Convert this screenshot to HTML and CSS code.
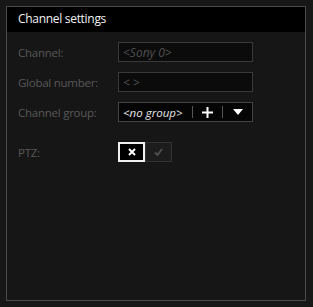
FILE: index.html
```html
<!DOCTYPE html>
<html lang="en">
<head>
  <meta charset="UTF-8">
  <title>Channel settings</title>
  <link rel="stylesheet" href="styles.css">
</head>
<body>
  <div class="panel">
    <div class="panel-title">Channel settings</div>
    <div class="form">
      <label>Channel:</label>
      <div class="field"><span class="hint">&lt;Sony 0&gt;</span></div>

      <label>Global number:</label>
      <div class="field"><span class="hint wide">&lt;&gt;</span></div>

      <label>Channel group:</label>
      <div class="field group">
        <span class="value">&lt;no group&gt;</span>
        <span class="sep"></span>
        <span class="btn">
          <svg width="11" height="11" viewBox="0 0 11 11"><path d="M5.5 0v11M0 5.5h11" stroke="#fff" stroke-width="2"/></svg>
        </span>
        <span class="sep"></span>
        <span class="btn">
          <svg width="10" height="6" viewBox="0 0 10 6"><path d="M0 0h10L5 6z" fill="#fff"/></svg>
        </span>
      </div>

      <label class="ptz">PTZ:</label>
      <div class="toggle ptz">
        <span class="opt on">
          <svg width="8" height="8" viewBox="0 0 8 8"><path d="M1 1l6 6M7 1L1 7" stroke="#fff" stroke-width="2"/></svg>
        </span>
        <span class="opt">
          <svg width="9" height="8" viewBox="0 0 9 8"><path d="M1 4.5l2.5 2.5L8 1" stroke="#4e4e4e" stroke-width="2" fill="none"/></svg>
        </span>
      </div>
    </div>
  </div>
</body>
</html>
```

FILE: styles.css
```css
body {
  margin: 0;
  padding: 6px;
  background-color: #171717;
  font-family: "Open Sans", "Noto Sans", sans-serif;
}
.panel {
  width: 298px;
  height: 293px;
  border: 1px solid #4b4b4b;
  background-color: #161616;
}
.panel-title {
  height: 25px;
  line-height: 24px;
  padding-left: 11px;
  background-color: #000;
  color: #f2f2f2;
  font-size: 12px;
  letter-spacing: -0.3px;
}
.form {
  display: grid;
  grid-template-columns: 100px 135px;
  grid-auto-rows: 20px;
  row-gap: 10px;
  padding: 10px 0 0 11px;
  align-items: center;
}
.form label {
  color: #585858;
  font-size: 11.5px;
  letter-spacing: -0.25px;
}
.ptz {
  margin-top: 20px;
}
.field {
  height: 20px;
  box-sizing: border-box;
  border: 1px solid #3a3a3a;
  background-color: #0b0b0b;
  display: flex;
  align-items: center;
  padding-left: 4px;
}
.hint {
  color: #4f4f4f;
  font-style: italic;
  font-size: 12px;
}
.hint.wide {
  letter-spacing: 3px;
}
.group {
  border-color: #444;
  background-color: #050505;
}
.group .value {
  color: #e6e6e6;
  font-style: italic;
  font-size: 11.5px;
  width: 70px;
}
.sep {
  width: 1px;
  height: 12px;
  background-color: #555;
}
.btn {
  width: 29px;
  display: flex;
  justify-content: center;
  align-items: center;
}
.toggle {
  display: flex;
  height: 20px;
}
.opt {
  width: 27px;
  height: 20px;
  box-sizing: border-box;
  display: flex;
  justify-content: center;
  align-items: center;
  border: 1px solid #333;
  background-color: #1c1c1c;
}
.opt.on {
  border: 2px solid #f0f0f0;
  background-color: #000;
}
```
